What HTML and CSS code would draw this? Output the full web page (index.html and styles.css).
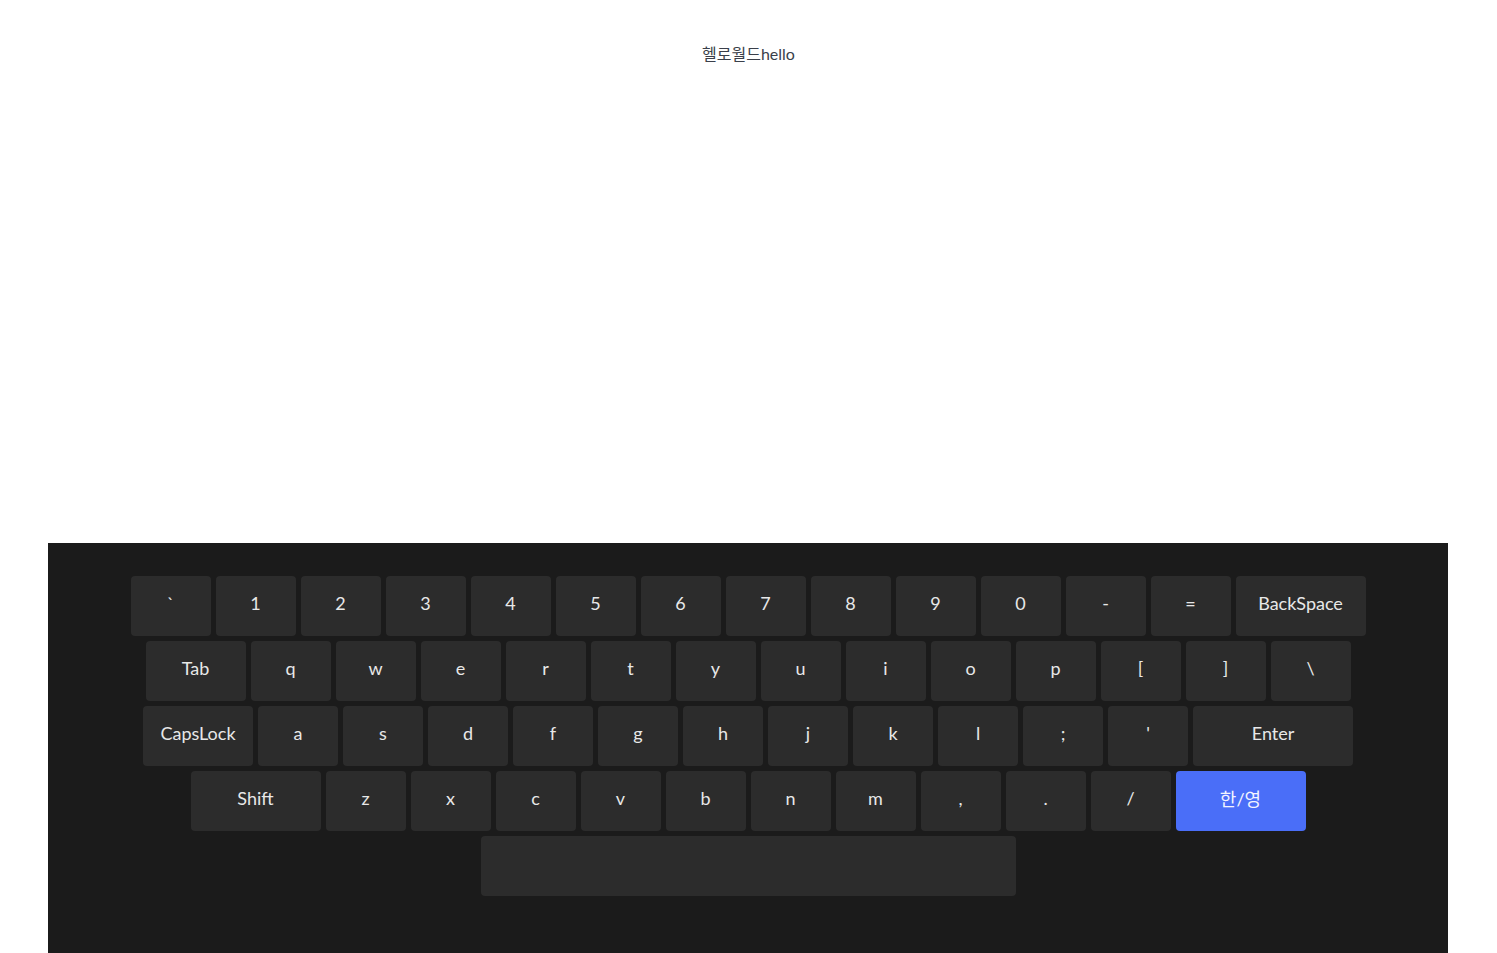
FILE: index.html
```html
<!DOCTYPE html>
<html lang="ko">
<head>
<meta charset="utf-8">
<link rel="stylesheet" href="styles.css">
</head>
<body>
<div class="output">헬로월드hello</div>
<div class="keyboard">
  <div class="row">
    <div class="key">`</div><div class="key">1</div><div class="key">2</div><div class="key">3</div><div class="key">4</div><div class="key">5</div><div class="key">6</div><div class="key">7</div><div class="key">8</div><div class="key">9</div><div class="key">0</div><div class="key">-</div><div class="key">=</div><div class="key w130">BackSpace</div>
  </div>
  <div class="row">
    <div class="key w100">Tab</div><div class="key">q</div><div class="key">w</div><div class="key">e</div><div class="key">r</div><div class="key">t</div><div class="key">y</div><div class="key">u</div><div class="key">i</div><div class="key">o</div><div class="key">p</div><div class="key">[</div><div class="key">]</div><div class="key">\</div>
  </div>
  <div class="row">
    <div class="key w110">CapsLock</div><div class="key">a</div><div class="key">s</div><div class="key">d</div><div class="key">f</div><div class="key">g</div><div class="key">h</div><div class="key">j</div><div class="key">k</div><div class="key">l</div><div class="key">;</div><div class="key">'</div><div class="key w160">Enter</div>
  </div>
  <div class="row">
    <div class="key w130">Shift</div><div class="key">z</div><div class="key">x</div><div class="key">c</div><div class="key">v</div><div class="key">b</div><div class="key">n</div><div class="key">m</div><div class="key">,</div><div class="key">.</div><div class="key">/</div><div class="key w130 lang">한/영</div>
  </div>
  <div class="row">
    <div class="key space"></div>
  </div>
</div>
</body>
</html>
```
FILE: styles.css
```css
html, body {
  margin: 0;
  padding: 0;
  background: #ffffff;
  height: 100%;
}
body {
  font-family: Lato, "Noto Sans CJK KR", sans-serif;
  display: flex;
  flex-direction: column;
  align-items: center;
  overflow: hidden;
}
.output {
  margin-top: 43px;
  height: 22px;
  line-height: 22px;
  font-size: 16px;
  color: #3a3f4a;
  text-align: center;
  flex: 1;
}
.keyboard {
  width: 1400px;
  height: 410px;
  box-sizing: border-box;
  background: #1b1b1b;
  padding-top: 33px;
  display: flex;
  flex-direction: column;
  gap: 5px;
  margin-left: -1px;
}
.row {
  display: flex;
  justify-content: center;
  gap: 5px;
}
.key {
  width: 80px;
  height: 60px;
  background: #2c2c2c;
  border-radius: 4px;
  color: #e8e8e8;
  font-size: 18px;
  display: flex;
  align-items: center;
  justify-content: center;
  padding-bottom: 6px;
  box-sizing: border-box;
}
.w100 { width: 100px; }
.w110 { width: 110px; }
.w130 { width: 130px; }
.w160 { width: 160px; }
.space { width: 535px; }
.lang {
  background: #4a6ef8;
  color: #f2f4ff;
}
```
